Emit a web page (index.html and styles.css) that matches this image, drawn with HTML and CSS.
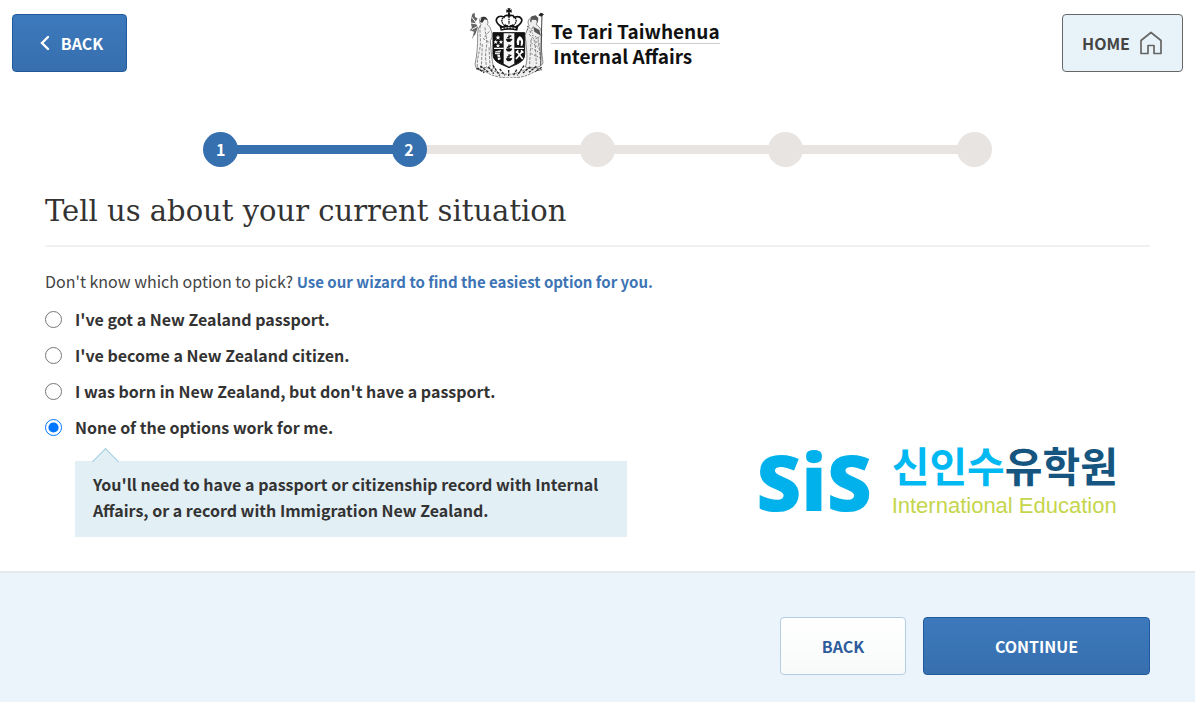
FILE: index.html
```html
<!DOCTYPE html>
<html lang="en">
<head>
  <meta charset="utf-8">
  <title>Tell us about your current situation</title>
  <link rel="stylesheet" href="styles.css">
</head>
<body>
  <header class="header">
    <button type="button" class="btn btn-primary btn-back">
      <svg width="10" height="16" viewBox="0 0 10 16"><path d="M8 2L2 8l6 6" fill="none" stroke="#fff" stroke-width="2.4" stroke-linecap="round"/></svg>
      BACK
    </button>

    <div class="brand">
      <svg class="arms" viewBox="0 0 234 210">
        <!-- left supporter -->
        <g fill="#f4f4f4" stroke="#555" stroke-width="2">
          <path d="M38 28c-9 3-8 15-2 22-9 8-11 22-10 37 0 24-2 57-8 82l5 14c17 8 38 7 51-2-6-28-8-54-10-83 8-12 6-24 0-36 0-5-5-9-9-12 6-10-4-25-17-22z"/>
          <path d="M34 52c-4 25 4 45-2 72s-8 38-7 58M48 58c0 20 9 38 4 61-4 20-2 45 2 65M61 70l-18 22 22 14M40 108l-3 72M60 118l3 58" fill="none" stroke-dasharray="9 4"/>
        </g>
        <path d="M10 18c-5 12-6 29-1 41l-7 8 13 4-6 23 10-15 8-22-8-14 7-12-8-4-1-13z" fill="#666"/>
        <path d="M7 26l17 21M5 45l20 3M8 65l18-10M16 82l-2 15" stroke="#fff" stroke-width="3"/>
        <path d="M38 28c8-5 17 0 18 9l-9-3-7 10-7-2z" fill="#333"/>
        <!-- right supporter -->
        <g fill="#eee" stroke="#555" stroke-width="2">
          <path d="M185 29c8-7 20-3 21 8l-4 13c11 6 18 19 16 37-3 23 0 46 4 78-8 16-35 18-53 12 8-22 4-47 2-72l-3-23 12-30c-5-8-3-17 5-23z"/>
          <path d="M193 55l-12 25 16 14 17-9M186 95l-4 73M198 98l4 70M207 94l8 63" fill="none" stroke-dasharray="9 4"/>
        </g>
        <path d="M183 37l5-12 12-3 8 8-2 14-5-8-12-1-3 10zM193 56l18 10 5 17-9-5-11-7z" fill="#555"/>
        <path d="M219 15l-4 158" stroke="#444" stroke-width="3"/>
        <path d="M174 54l18 15M174 64l17 12M190 82l27 12M186 92l31 19M187 105l30 18M188 121l28 16M187 137l31 15" stroke="#666" stroke-width="3" stroke-dasharray="4 5"/>
        <path d="M215 14l-7 8 9 4 8-7z" fill="#222"/>
        <!-- fern scroll -->
        <path d="M22 183c25-11 41-1 52 5 28 14 60 14 87 0 18-9 39-12 58-2-17 0-26 8-42 15-32 13-86 11-113-2-14-7-24-16-42-16z" fill="#eee" stroke="#444" stroke-width="2" stroke-dasharray="8 3"/>
        <path d="M24 180l22 14M34 174l25 19M58 176l16 21M72 172l20 31M92 183l16 19M119 186v18M143 185l-10 18M165 173l-20 29M184 176l-22 19M202 175l-22 18M218 178l-20 13" stroke="#222" stroke-width="4" stroke-dasharray="8 3"/>
        <!-- shield -->
        <path d="M72 74h95v65c0 24-25 29-47 40-23-11-48-16-48-40z" fill="#111" stroke="#111" stroke-width="3"/>
        <path d="M104 76h32v91l-16 9-16-9z" fill="#f8f8f8"/>
        <path d="M75 121h29M136 121h29" stroke="#fff" stroke-width="4"/>
        <g fill="#111" stroke="#111" stroke-width="3">
          <path d="M120 80v15M112 94h17l-5 6h-9zM120 109v15M112 123h17l-5 6h-9zM120 138v15M112 152h17l-5 6h-9z"/>
          <path d="M114 90l13-7M114 119l13-7M114 148l13-7" stroke-width="4"/>
        </g>
        <g fill="#fff">
          <path d="M87 81l2 5h5l-4 4 2 5-5-3-5 3 2-5-4-4h5zM80 96l2 4h5l-4 3 2 5-5-3-5 3 2-5-3-3h4zM96 96l2 4h4l-3 3 1 5-4-3-5 3 2-5-4-3h5zM87 107l2 4h4l-3 3 1 4-4-2-4 2 1-4-3-3h4z"/>
          <path d="M145 111c-4-11 0-23 7-26 9 3 14 17 8 28l-5 1 1-16-5-1-1 14z"/>
          <path d="M79 130l17-3-4 12 3 15-8 3-2-16-7-3z"/>
        </g>
        <path d="M143 130l18 23M161 129l-20 24M141 134l7-7M156 127l7 7" stroke="#fff" stroke-width="5"/>
        <path d="M79 133h17M80 139h15M83 148h11" stroke="#111" stroke-width="2"/>
        <!-- crown -->
        <path d="M94 54C70 35 87 20 105 27c4-6 10-6 15-3 7-3 13-2 16 4 18-7 34 8 10 26z" fill="#fff" stroke="#111" stroke-width="5"/>
        <path d="M106 53c-11-12-9-22 0-25M134 53c11-12 9-22 0-25M120 25v28" fill="none" stroke="#111" stroke-width="4" stroke-dasharray="5 2"/>
        <path d="M115 1h10l-3 6 6-3v10l-6-2 2 9h-8l2-9-6 2V4l6 3z" fill="#111"/>
        <path d="M91 50l9 5 9-6 11 6 11-6 9 6 9-5-4 18c-17-4-33-4-50 0z" fill="#111"/>
        <path d="M98 62c15-4 30-4 44 0" fill="none" stroke="#fff" stroke-width="3" stroke-dasharray="6 3"/>
        <path d="M98 52h6M117 51h6M136 52h6" stroke="#fff" stroke-width="4"/>
      </svg>
      <div class="brand-name">
        <div class="brand-maori">Te Tari Taiwhenua</div>
        <div class="brand-english">Internal Affairs</div>
      </div>
    </div>

    <button type="button" class="btn btn-home">
      HOME
      <svg width="24" height="24" viewBox="0 0 24 24"><path d="M2 9.500L12 1.500l10 8V22.500h-7v-8H9v8H2z" fill="none" stroke="#666" stroke-width="1.700" stroke-linejoin="round"/></svg>
    </button>
  </header>

  <div class="steps">
    <span class="step done">1</span>
    <span class="bar done"></span>
    <span class="step done">2</span>
    <span class="bar"></span>
    <span class="step"></span>
    <span class="bar"></span>
    <span class="step"></span>
    <span class="bar"></span>
    <span class="step"></span>
  </div>

  <main class="main">
    <h1>Tell us about your current situation</h1>
    <p class="hint">Don't know which option to pick? <a href="#">Use our wizard to find the easiest option for you.</a></p>

    <div class="content">
      <form class="options">
        <div class="option">
          <input type="radio" name="situation" id="passport">
          <label for="passport">I've got a New Zealand passport.</label>
        </div>
        <div class="option">
          <input type="radio" name="situation" id="citizen">
          <label for="citizen">I've become a New Zealand citizen.</label>
        </div>
        <div class="option">
          <input type="radio" name="situation" id="born">
          <label for="born">I was born in New Zealand, but don't have a passport.</label>
        </div>
        <div class="option">
          <input type="radio" name="situation" id="none" checked>
          <label for="none">None of the options work for me.</label>
        </div>
        <div class="callout">You'll need to have a passport or citizenship record with Internal Affairs, or a record with Immigration New Zealand.</div>
      </form>

      <div class="sis">
        <div class="sis-mark">SiS</div>
        <div class="sis-text">
          <div class="sis-korean" lang="ko">신인수<span>유학원</span></div>
          <div class="sis-english">International Education</div>
        </div>
      </div>
    </div>
  </main>

  <footer class="footer">
    <button type="button" class="btn btn-secondary">BACK</button>
    <button type="button" class="btn btn-primary btn-continue">CONTINUE</button>
  </footer>
</body>
</html>
```

FILE: styles.css
```css
* {
  box-sizing: border-box;
}

body {
  margin: 0;
  min-height: 100vh;
  display: flex;
  flex-direction: column;
  font-family: "Noto Sans CJK KR", "Open Sans", sans-serif;
  font-size: 16px;
  line-height: 26px;
  color: #333;
  background-color: #fff;
}

.header {
  display: flex;
  justify-content: space-between;
  align-items: center;
  padding: 8px 12px;
}

.btn {
  display: flex;
  align-items: center;
  justify-content: center;
  height: 58px;
  padding: 0 18px;
  font-family: inherit;
  font-size: 16px;
  font-weight: bold;
  border-radius: 4px;
  cursor: pointer;
}

.btn-primary {
  color: #fff;
  background: linear-gradient(#3c79bc, #376fae);
  border: 1px solid #1f5a9c;
}

.btn-back {
  width: 115px;
  padding: 0 14px 0 18px;
  gap: 11px;
}

.btn-home {
  width: 121px;
  gap: 9px;
  color: #444;
  background-color: #e7f3f8;
  border: 1px solid #666;
}

.btn-home svg {
  flex: none;
}

.brand {
  display: flex;
  align-items: center;
  gap: 4px;
  color: #111;
}

.arms {
  width: 78px;
  height: 70px;
}

.brand-name {
  font-size: 19px;
  font-weight: bold;
  line-height: 24px;
}

.brand-maori {
  border-bottom: 1px solid #ccc;
}

.brand-english {
  padding-left: 2px;
}

.steps {
  display: flex;
  align-items: center;
  width: 66%;
  margin: 46px auto 0;
}

.step {
  position: relative;
  z-index: 1;
  width: 35px;
  height: 35px;
  line-height: 35px;
  border-radius: 50%;
  text-align: center;
  font-weight: bold;
  color: #fff;
  background-color: #e8e4e1;
}

.bar {
  flex: 1;
  height: 9px;
  margin: 0 -1px;
  background-color: #e8e4e1;
}

.step.done,
.bar.done {
  background-color: #3770ae;
}

.main {
  padding: 20px 45px 34px;
}

h1 {
  margin: 0 0 21px;
  padding-bottom: 10px;
  border-bottom: 2px solid #f1f1f1;
  font-family: "DejaVu Serif", serif;
  font-size: 29px;
  font-weight: normal;
  line-height: 48px;
}

.hint {
  margin: 0 0 6px;
  color: #444;
}

.hint a {
  font-size: 15px;
  font-weight: bold;
  color: #3c74b5;
  text-decoration: none;
}

.content {
  display: flex;
  justify-content: space-between;
  align-items: flex-end;
}

.options {
  width: 582px;
}

.option {
  display: flex;
  align-items: center;
  height: 36px;
  font-weight: bold;
}

.option input {
  width: 17px;
  height: 17px;
  margin: 0 13px 0 0;
}

.callout {
  position: relative;
  margin: 16px 0 0 30px;
  padding: 10px 18px 14px;
  font-weight: bold;
  background-color: #e2eff5;
}

.callout::before {
  content: "";
  position: absolute;
  top: -9px;
  left: 21px;
  width: 18px;
  height: 18px;
  background: linear-gradient(135deg, #e2eff5 50%, transparent 50%);
  border: solid #9ccbe0;
  border-width: 1px 0 0 1px;
  transform: rotate(45deg);
}

.sis {
  display: flex;
  align-items: center;
  gap: 20px;
  margin: 0 32px 16px 0;
}

.sis-mark {
  font-family: "Noto Sans", "Open Sans", sans-serif;
  font-size: 78px;
  font-weight: 900;
  line-height: 80px;
  color: #00b1eb;
}

.sis-korean {
  margin-bottom: 4px;
  font-size: 41px;
  font-weight: bold;
  line-height: 46px;
  color: #00b9f2;
}

.sis-korean span {
  color: #15557f;
}

.sis-english {
  font-family: "Liberation Sans", Arial, sans-serif;
  font-size: 22px;
  line-height: 30px;
  color: #c5d54c;
}

.footer {
  flex: 1;
  display: flex;
  justify-content: flex-end;
  align-items: flex-start;
  gap: 17px;
  padding: 44px 45px 27px;
  background-color: #ebf3fb;
  border-top: 2px solid #e3eaec;
}

.btn-secondary {
  width: 126px;
  color: #2d5b9b;
  background: linear-gradient(#fff, #f8fafa);
  border: 1px solid #b3cde6;
}

.btn-continue {
  width: 227px;
}
```
